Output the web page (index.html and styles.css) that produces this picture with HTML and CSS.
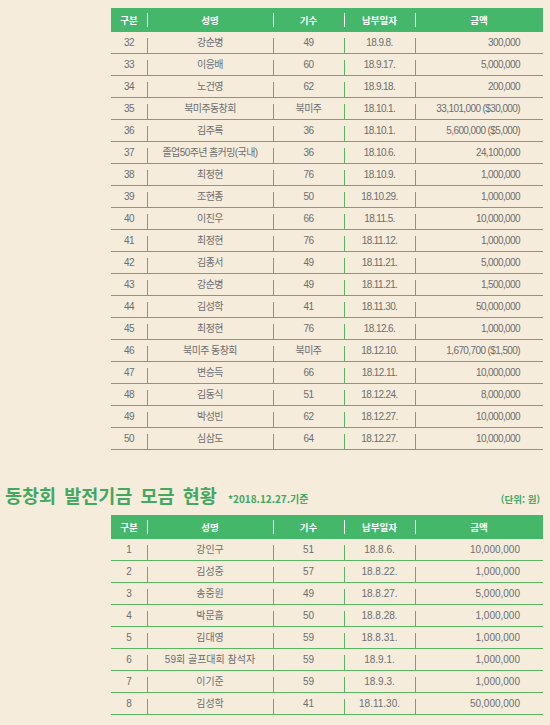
FILE: index.html
```html
<!DOCTYPE html>
<html lang="ko">
<head>
<meta charset="utf-8">
<link rel="stylesheet" href="styles.css">
</head>
<body>
<div class="page">
  <table class="fund fund-a">
    <thead>
      <tr><th class="c1">구분</th><th class="c2">성명</th><th class="c3">기수</th><th class="c4">납부일자</th><th class="c5">금액</th></tr>
    </thead>
    <tbody>
      <tr><td>32</td><td>강순병</td><td>49</td><td>18.9.8.</td><td class="amt">300,000</td></tr>
      <tr><td>33</td><td>이응배</td><td>60</td><td>18.9.17.</td><td class="amt">5,000,000</td></tr>
      <tr><td>34</td><td>노건영</td><td>62</td><td>18.9.18.</td><td class="amt">200,000</td></tr>
      <tr><td>35</td><td>북미주동창회</td><td>북미주</td><td>18.10.1.</td><td class="amt">33,101,000 ($30,000)</td></tr>
      <tr><td>36</td><td>김주록</td><td>36</td><td>18.10.1.</td><td class="amt">5,600,000 ($5,000)</td></tr>
      <tr><td>37</td><td>졸업50주년 홈커밍(국내)</td><td>36</td><td>18.10.6.</td><td class="amt">24,100,000</td></tr>
      <tr><td>38</td><td>최정현</td><td>76</td><td>18.10.9.</td><td class="amt">1,000,000</td></tr>
      <tr><td>39</td><td>조현종</td><td>50</td><td>18.10.29.</td><td class="amt">1,000,000</td></tr>
      <tr><td>40</td><td>이진우</td><td>66</td><td>18.11.5.</td><td class="amt">10,000,000</td></tr>
      <tr><td>41</td><td>최정현</td><td>76</td><td>18.11.12.</td><td class="amt">1,000,000</td></tr>
      <tr><td>42</td><td>김종서</td><td>49</td><td>18.11.21.</td><td class="amt">5,000,000</td></tr>
      <tr><td>43</td><td>강순병</td><td>49</td><td>18.11.21.</td><td class="amt">1,500,000</td></tr>
      <tr><td>44</td><td>김성학</td><td>41</td><td>18.11.30.</td><td class="amt">50,000,000</td></tr>
      <tr><td>45</td><td>최정현</td><td>76</td><td>18.12.6.</td><td class="amt">1,000,000</td></tr>
      <tr><td>46</td><td>북미주 동창회</td><td>북미주</td><td>18.12.10.</td><td class="amt">1,670,700 ($1,500)</td></tr>
      <tr><td>47</td><td>변승득</td><td>66</td><td>18.12.11.</td><td class="amt">10,000,000</td></tr>
      <tr><td>48</td><td>김동식</td><td>51</td><td>18.12.24.</td><td class="amt">8,000,000</td></tr>
      <tr><td>49</td><td>박성빈</td><td>62</td><td>18.12.27.</td><td class="amt">10,000,000</td></tr>
      <tr><td>50</td><td>심삼도</td><td>64</td><td>18.12.27.</td><td class="amt">10,000,000</td></tr>
    </tbody>
  </table>

  <div class="title-row">
    <h2 class="title">동창회 발전기금 모금 현황 <span class="basis">*2018.12.27.기준</span></h2>
    <span class="unit">(단위: 원)</span>
  </div>

  <table class="fund fund-b">
    <thead>
      <tr><th class="c1">구분</th><th class="c2">성명</th><th class="c3">기수</th><th class="c4">납부일자</th><th class="c5">금액</th></tr>
    </thead>
    <tbody>
      <tr><td>1</td><td>강인구</td><td>51</td><td>18.8.6.</td><td class="amt">10,000,000</td></tr>
      <tr><td>2</td><td>김성중</td><td>57</td><td>18.8.22.</td><td class="amt">1,000,000</td></tr>
      <tr><td>3</td><td>송중원</td><td>49</td><td>18.8.27.</td><td class="amt">5,000,000</td></tr>
      <tr><td>4</td><td>박문흠</td><td>50</td><td>18.8.28.</td><td class="amt">1,000,000</td></tr>
      <tr><td>5</td><td>김대영</td><td>59</td><td>18.8.31.</td><td class="amt">1,000,000</td></tr>
      <tr><td>6</td><td>59회 골프대회 참석자</td><td>59</td><td>18.9.1.</td><td class="amt">1,000,000</td></tr>
      <tr><td>7</td><td>이기준</td><td>59</td><td>18.9.3.</td><td class="amt">1,000,000</td></tr>
      <tr><td>8</td><td>김성학</td><td>41</td><td>18.11.30.</td><td class="amt">50,000,000</td></tr>
    </tbody>
  </table>
</div>
</body>
</html>
```

FILE: styles.css
```css
html, body {
  margin: 0;
  padding: 0;
  background: #f5ecdc;
}

.page {
  width: 550px;
  padding-top: 8px;
  display: flex;
  flex-direction: column;
  font-family: "Liberation Sans", "Noto Sans CJK KR", sans-serif;
}

.fund {
  margin-left: 111px;
  width: 432px;
  border-collapse: separate;
  border-spacing: 0;
  table-layout: fixed;
}

.c1 { width: 36px; }
.c2 { width: 126px; }
.c3 { width: 71px; }
.c4 { width: 71px; }
.c5 { width: 128px; }

.fund th {
  position: relative;
  height: 24px;
  padding: 0;
  background: #45b76a;
  color: #ffffff;
  font-family: "Noto Sans CJK KR", sans-serif;
  font-weight: 700;
  font-size: 9.5px;
  line-height: 24px;
  text-align: center;
}

.fund th + th::before {
  content: "";
  position: absolute;
  left: 0;
  top: 5px;
  width: 1px;
  height: 14px;
  background: #ffffff;
}

.fund td {
  position: relative;
  height: 21px;
  padding: 0;
  border-bottom: 1px solid #5bb565;
  color: #6e6e6e;
  font-size: 10px;
  line-height: 21px;
  text-align: center;
  white-space: nowrap;
}

.fund-a td {
  letter-spacing: -0.6px;
}

.fund td + td::before {
  content: "";
  position: absolute;
  left: 0;
  bottom: 0;
  width: 1px;
  height: 15px;
  background: #5bb565;
}

.fund td.amt {
  text-align: right;
  padding-right: 23px;
}

.title-row {
  display: flex;
  align-items: baseline;
  justify-content: space-between;
  margin: 35px 0 10px 0;
  padding: 0 10px 0 5px;
  height: 20px;
}

.title {
  margin: 0;
  font-family: "Noto Sans CJK KR", sans-serif;
  font-size: 18.5px;
  font-weight: 700;
  line-height: 20px;
  color: #43a860;
  word-spacing: 3px;
  white-space: nowrap;
}

.basis {
  font-size: 10px;
  font-weight: 700;
  word-spacing: 0;
  margin-left: 3px;
}

.unit {
  font-family: "Noto Sans CJK KR", sans-serif;
  font-size: 9.5px;
  font-weight: 700;
  color: #43a860;
}
```
